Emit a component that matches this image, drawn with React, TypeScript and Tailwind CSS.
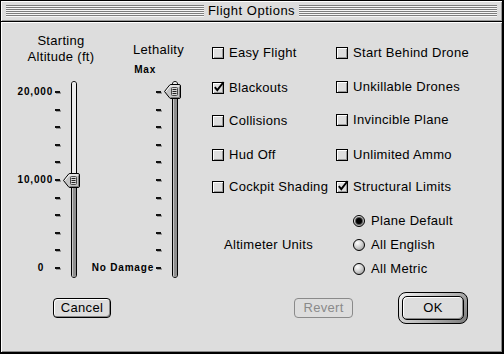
import React from "react";

const ticks = Array.from({ length: 11 }, (_, i) => i);

function Thumb() {
  return (
    <svg width="17" height="15" viewBox="0 0 17 15">
      <path
        d="M0.5 7.5 L5.5 1.2 Q6 0.5 7 0.5 L15 0.5 Q16.5 0.5 16.5 2 L16.5 13 Q16.5 14.5 15 14.5 L7 14.5 Q6 14.5 5.5 13.8 Z"
        fill="#c6c6c6"
        stroke="#000"
      />
      <path d="M1.8 7.5 L6.2 2 L15.5 2" fill="none" stroke="#fff" />
      <path d="M6.5 13.5 L15.5 13.5 L15.5 2.5" fill="none" stroke="#7a7a7a" />
      <rect x="7.5" y="3.5" width="6" height="8" rx="1" fill="#d6d6d6" stroke="#4a4a4a" />
      <path d="M8.5 5.5 H12.5 M8.5 7.5 H12.5 M8.5 9.5 H12.5" stroke="#222" />
    </svg>
  );
}

function Tick() {
  return <div className="ml-[2px] h-[2px] w-[5px] shrink-0 bg-[#111] shadow-[1px_1px_0_#9a9a9a]" />;
}

const small = "text-[10px] font-bold leading-[12px] tracking-[0.8px] whitespace-nowrap";

function Check({ checked }: { checked?: boolean }) {
  return (
    <div className="relative h-[12px] w-[12px] shrink-0 border border-black bg-[#dedede] shadow-[inset_1px_1px_0_#fff,inset_-1px_-1px_0_#9a9a9a]">
      {checked && (
        <svg className="absolute left-[0px] top-[-2px]" width="12" height="12" viewBox="0 0 12 12">
          <path d="M1.8 6.2 L4.3 9.2 L10.6 1" stroke="#000" strokeWidth="1.9" fill="none" />
        </svg>
      )}
    </div>
  );
}

function CheckRow({ label, checked, cls }: { label: string; checked?: boolean; cls: string }) {
  return (
    <div className={"flex h-[16px] items-center gap-[5px] " + cls}>
      <Check checked={checked} />
      <span className="whitespace-nowrap">{label}</span>
    </div>
  );
}

function Radio({ label, selected }: { label: string; selected?: boolean }) {
  return (
    <div className="flex h-[16px] items-center gap-[6px]">
      <div className="relative h-[12px] w-[12px] shrink-0 rounded-full border border-black bg-[radial-gradient(circle_at_35%_30%,#ffffff_0%,#d2d2d2_45%,#8a8a8a_100%)]">
        {selected && (
          <div className="absolute left-[2px] top-[2px] h-[6px] w-[6px] rounded-full bg-black shadow-[0_0_0_1px_#555]" />
        )}
      </div>
      <span className="whitespace-nowrap">{label}</span>
    </div>
  );
}

export default function App() {
  const altLabels: Record<number, React.ReactNode> = {
    0: <span className={small}>20,000</span>,
    5: <span className={small}>10,000</span>,
    10: <span className={small + " mr-[9px]"}>0</span>,
  };
  const lethLabels: Record<number, React.ReactNode> = {
    10: <span className={small}>No Damage</span>,
  };

  return (
    <div className="flex h-[354px] w-[504px] flex-col border-l border-t border-r-2 border-b-2 border-black bg-[#dddddd] font-['Liberation_Sans',Arial,sans-serif] text-[13px] leading-[16px] tracking-[0.3px] text-black">
      {/* Title bar */}
      <div className="flex h-[20px] shrink-0 items-center px-[5px] shadow-[inset_1px_1px_0_#fff,inset_-1px_-1px_0_#999]">
        <div className="h-[12px] flex-1 bg-[image:repeating-linear-gradient(to_bottom,#7d7d7d_0px,#7d7d7d_1px,#f6f6f6_1px,#f6f6f6_2px)]" />
        <span className="px-[4px] tracking-[0.5px] whitespace-nowrap">Flight Options</span>
        <div className="h-[12px] flex-1 bg-[image:repeating-linear-gradient(to_bottom,#7d7d7d_0px,#7d7d7d_1px,#f6f6f6_1px,#f6f6f6_2px)]" />
      </div>
      <div className="h-px shrink-0 bg-black" />

      {/* Content */}
      <div className="flex flex-1 flex-col shadow-[inset_1px_1px_0_#fff,inset_-1px_-1px_0_#8a8a8a]">
        <div className="flex h-[258px] shrink-0">
          {/* Altitude */}
          <div className="flex w-[100px] shrink-0 flex-col">
            <div className="ml-[20px] w-[80px] pt-[11px] text-center">
              <div>Starting</div>
              <div className="whitespace-nowrap">Altitude (ft)</div>
            </div>
            <div className="mt-[16px] flex h-[197px]">
              <div className="flex w-[59px] flex-col justify-between pb-[9px] pt-[10px]">
                {ticks.map((i) => (
                  <div key={i} className="flex h-[2px] items-center justify-end">
                    {altLabels[i]}
                    <Tick />
                  </div>
                ))}
              </div>
              <div className="relative ml-[11px] w-[6px]">
                <div className="flex h-full w-full flex-col overflow-hidden rounded-full border border-black">
                  <div className="h-[99px] bg-[#ececec]" />
                  <div className="flex-1 bg-[#8e8e8e] shadow-[inset_1px_0_0_#c8c8c8]" />
                </div>
                <div className="absolute left-[-8px] top-[92px]">
                  <Thumb />
                </div>
              </div>
            </div>
          </div>

          {/* Lethality */}
          <div className="flex w-[100px] shrink-0 flex-col">
            <div className="pl-[15px] pt-[20px] text-center">Lethality</div>
            <div className={"mt-[6px] w-[55px] text-right " + small}>Max</div>
            <div className="mt-[5px] flex h-[197px]">
              <div className="flex w-[60px] flex-col justify-between pb-[9px] pt-[10px]">
                {ticks.map((i) => (
                  <div key={i} className="flex h-[2px] items-center justify-end">
                    {lethLabels[i]}
                    <Tick />
                  </div>
                ))}
              </div>
              <div className="relative ml-[11px] w-[6px]">
                <div className="flex h-full w-full flex-col overflow-hidden rounded-full border border-black">
                  <div className="h-[10px] bg-[#ececec]" />
                  <div className="flex-1 bg-[#8e8e8e] shadow-[inset_1px_0_0_#c8c8c8]" />
                </div>
                <div className="absolute left-[-8px] top-[3px]">
                  <Thumb />
                </div>
              </div>
            </div>
          </div>

          {/* Options */}
          <div className="flex flex-1 flex-col pl-[11px] pt-[23px]">
            <div className="flex">
              <div className="flex w-[124px] flex-col">
                <CheckRow label="Easy Flight" cls="" />
                <CheckRow label="Blackouts" checked cls="mt-[19px]" />
                <CheckRow label="Collisions" cls="mt-[17px]" />
                <CheckRow label="Hud Off" cls="mt-[18px]" />
                <CheckRow label="Cockpit Shading" cls="mt-[16px]" />
              </div>
              <div className="flex flex-col">
                <CheckRow label="Start Behind Drone" cls="" />
                <CheckRow label="Unkillable Drones" cls="mt-[18px]" />
                <CheckRow label="Invincible Plane" cls="mt-[17px]" />
                <CheckRow label="Unlimited Ammo" cls="mt-[19px]" />
                <CheckRow label="Structural Limits" checked cls="mt-[16px]" />
              </div>
            </div>
            <div className="mt-[18px] flex items-center">
              <div className="ml-[12px] w-[129px] whitespace-nowrap">Altimeter Units</div>
              <div className="flex flex-col gap-[8px]">
                <Radio label="Plane Default" selected />
                <Radio label="All English" />
                <Radio label="All Metric" />
              </div>
            </div>
          </div>
        </div>

        {/* Buttons */}
        <div className="flex h-[55px] shrink-0 items-center">
          <div className="ml-[52px] flex h-[20px] w-[58px] items-center justify-center rounded-[4px] border border-black bg-[#dddddd] shadow-[inset_1px_1px_0_#fff,inset_-1px_-1px_0_#888]">
            Cancel
          </div>
          <div className="ml-[183px] flex h-[20px] w-[59px] items-center justify-center rounded-[4px] border border-[#8a8a8a] bg-[#dddddd] text-[#8a8a8a]">
            Revert
          </div>
          <div className="ml-[45px] flex h-[32px] w-[70px] rounded-[8px] border border-black bg-[linear-gradient(135deg,#f2f2f2,#b0b0b0_60%,#7a7a7a)] p-[3px]">
            <div className="flex flex-1 items-center justify-center rounded-[5px] border border-black bg-[#dddddd] shadow-[inset_1px_1px_0_#fff,inset_-1px_-1px_0_#888]">
              OK
            </div>
          </div>
        </div>
      </div>
    </div>
  );
}
